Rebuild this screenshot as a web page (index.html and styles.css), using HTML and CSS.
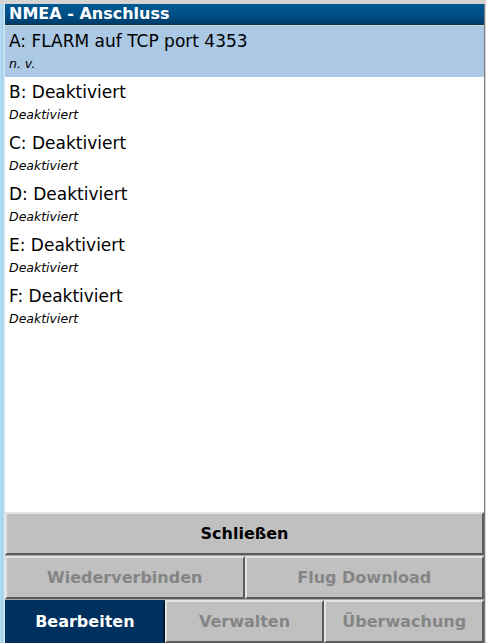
FILE: index.html
```html
<!DOCTYPE html>
<html lang="de">
<head>
<meta charset="utf-8">
<link rel="stylesheet" href="styles.css">
</head>
<body>
<div class="screen">
  <div class="side-left"></div>
  <div class="window">
    <div class="title">NMEA - Anschluss</div>
    <div class="list">
      <div class="item selected"><div class="main">A: FLARM auf TCP port 4353</div><div class="sub">n. v.</div></div>
      <div class="item"><div class="main">B: Deaktiviert</div><div class="sub">Deaktiviert</div></div>
      <div class="item"><div class="main">C: Deaktiviert</div><div class="sub">Deaktiviert</div></div>
      <div class="item"><div class="main">D: Deaktiviert</div><div class="sub">Deaktiviert</div></div>
      <div class="item"><div class="main">E: Deaktiviert</div><div class="sub">Deaktiviert</div></div>
      <div class="item"><div class="main">F: Deaktiviert</div><div class="sub">Deaktiviert</div></div>
    </div>
    <div class="buttons">
      <div class="row"><div class="btn">Schließen</div></div>
      <div class="row"><div class="btn disabled">Wiederverbinden</div><div class="btn disabled">Flug Download</div></div>
      <div class="row three"><div class="btn active">Bearbeiten</div><div class="btn disabled">Verwalten</div><div class="btn disabled">Überwachung</div></div>
    </div>
  </div>
  <div class="side-right"></div>
</div>
</body>
</html>
```
FILE: styles.css
```css
html, body {
  margin: 0;
  padding: 0;
  background: #d6d4d2;
  font-family: "DejaVu Sans", sans-serif;
}
.screen {
  display: flex;
  width: 486px;
  height: 643px;
  overflow: hidden;
}
.side-left {
  width: 5px;
  margin-top: 4px;
  background: linear-gradient(to right, #b6dcf2 0, #9fd0ee 3px, #d8e8f0 4px);
}
.side-right {
  width: 2px;
  margin-top: 4px;
  background: linear-gradient(to right, #7c7c7c 0, #7c7c7c 1px, #d6d4d2 1px);
}
.window {
  width: 479px;
  margin-top: 4px;
  display: flex;
  flex-direction: column;
  background: #ffffff;
}
.title {
  height: 22px;
  box-sizing: border-box;
  border-bottom: 1px solid #d9d6b8;
  background: linear-gradient(to bottom, #005a94 0%, #004f84 55%, #003a65 100%);
  color: #ffffff;
  font-weight: bold;
  font-size: 16px;
  line-height: 20px;
  padding-left: 4px;
}
.list {
  flex: 1;
  background: #ffffff;
}
.item {
  height: 51px;
  padding-left: 4px;
  box-sizing: border-box;
  color: #000000;
}
.item.selected {
  background: #abc9e4;
}
.main {
  font-size: 17px;
  line-height: 20px;
  padding-top: 5px;
}
.sub {
  font-size: 12.5px;
  font-style: italic;
  line-height: 16px;
  padding-top: 5px;
}
.buttons {
  display: flex;
  flex-direction: column;
  background: #a8a8a8;
}
.row {
  display: flex;
  height: 43px;
}
.row + .row {
  margin-top: 1px;
}
.btn {
  flex: 1;
  box-sizing: border-box;
  background: #c0c0c0;
  border-top: 2px solid #e2e2e2;
  border-left: 2px solid #e2e2e2;
  border-bottom: 2px solid #5c5c5c;
  border-right: 2px solid #5c5c5c;
  display: flex;
  align-items: center;
  justify-content: center;
  font-weight: bold;
  font-size: 16px;
  color: #000000;
}
.btn.disabled {
  color: #858585;
}
.btn.active {
  background: #00305e;
  border-color: #00305e;
  border-right-color: #001a33;
  color: #ffffff;
}
```
